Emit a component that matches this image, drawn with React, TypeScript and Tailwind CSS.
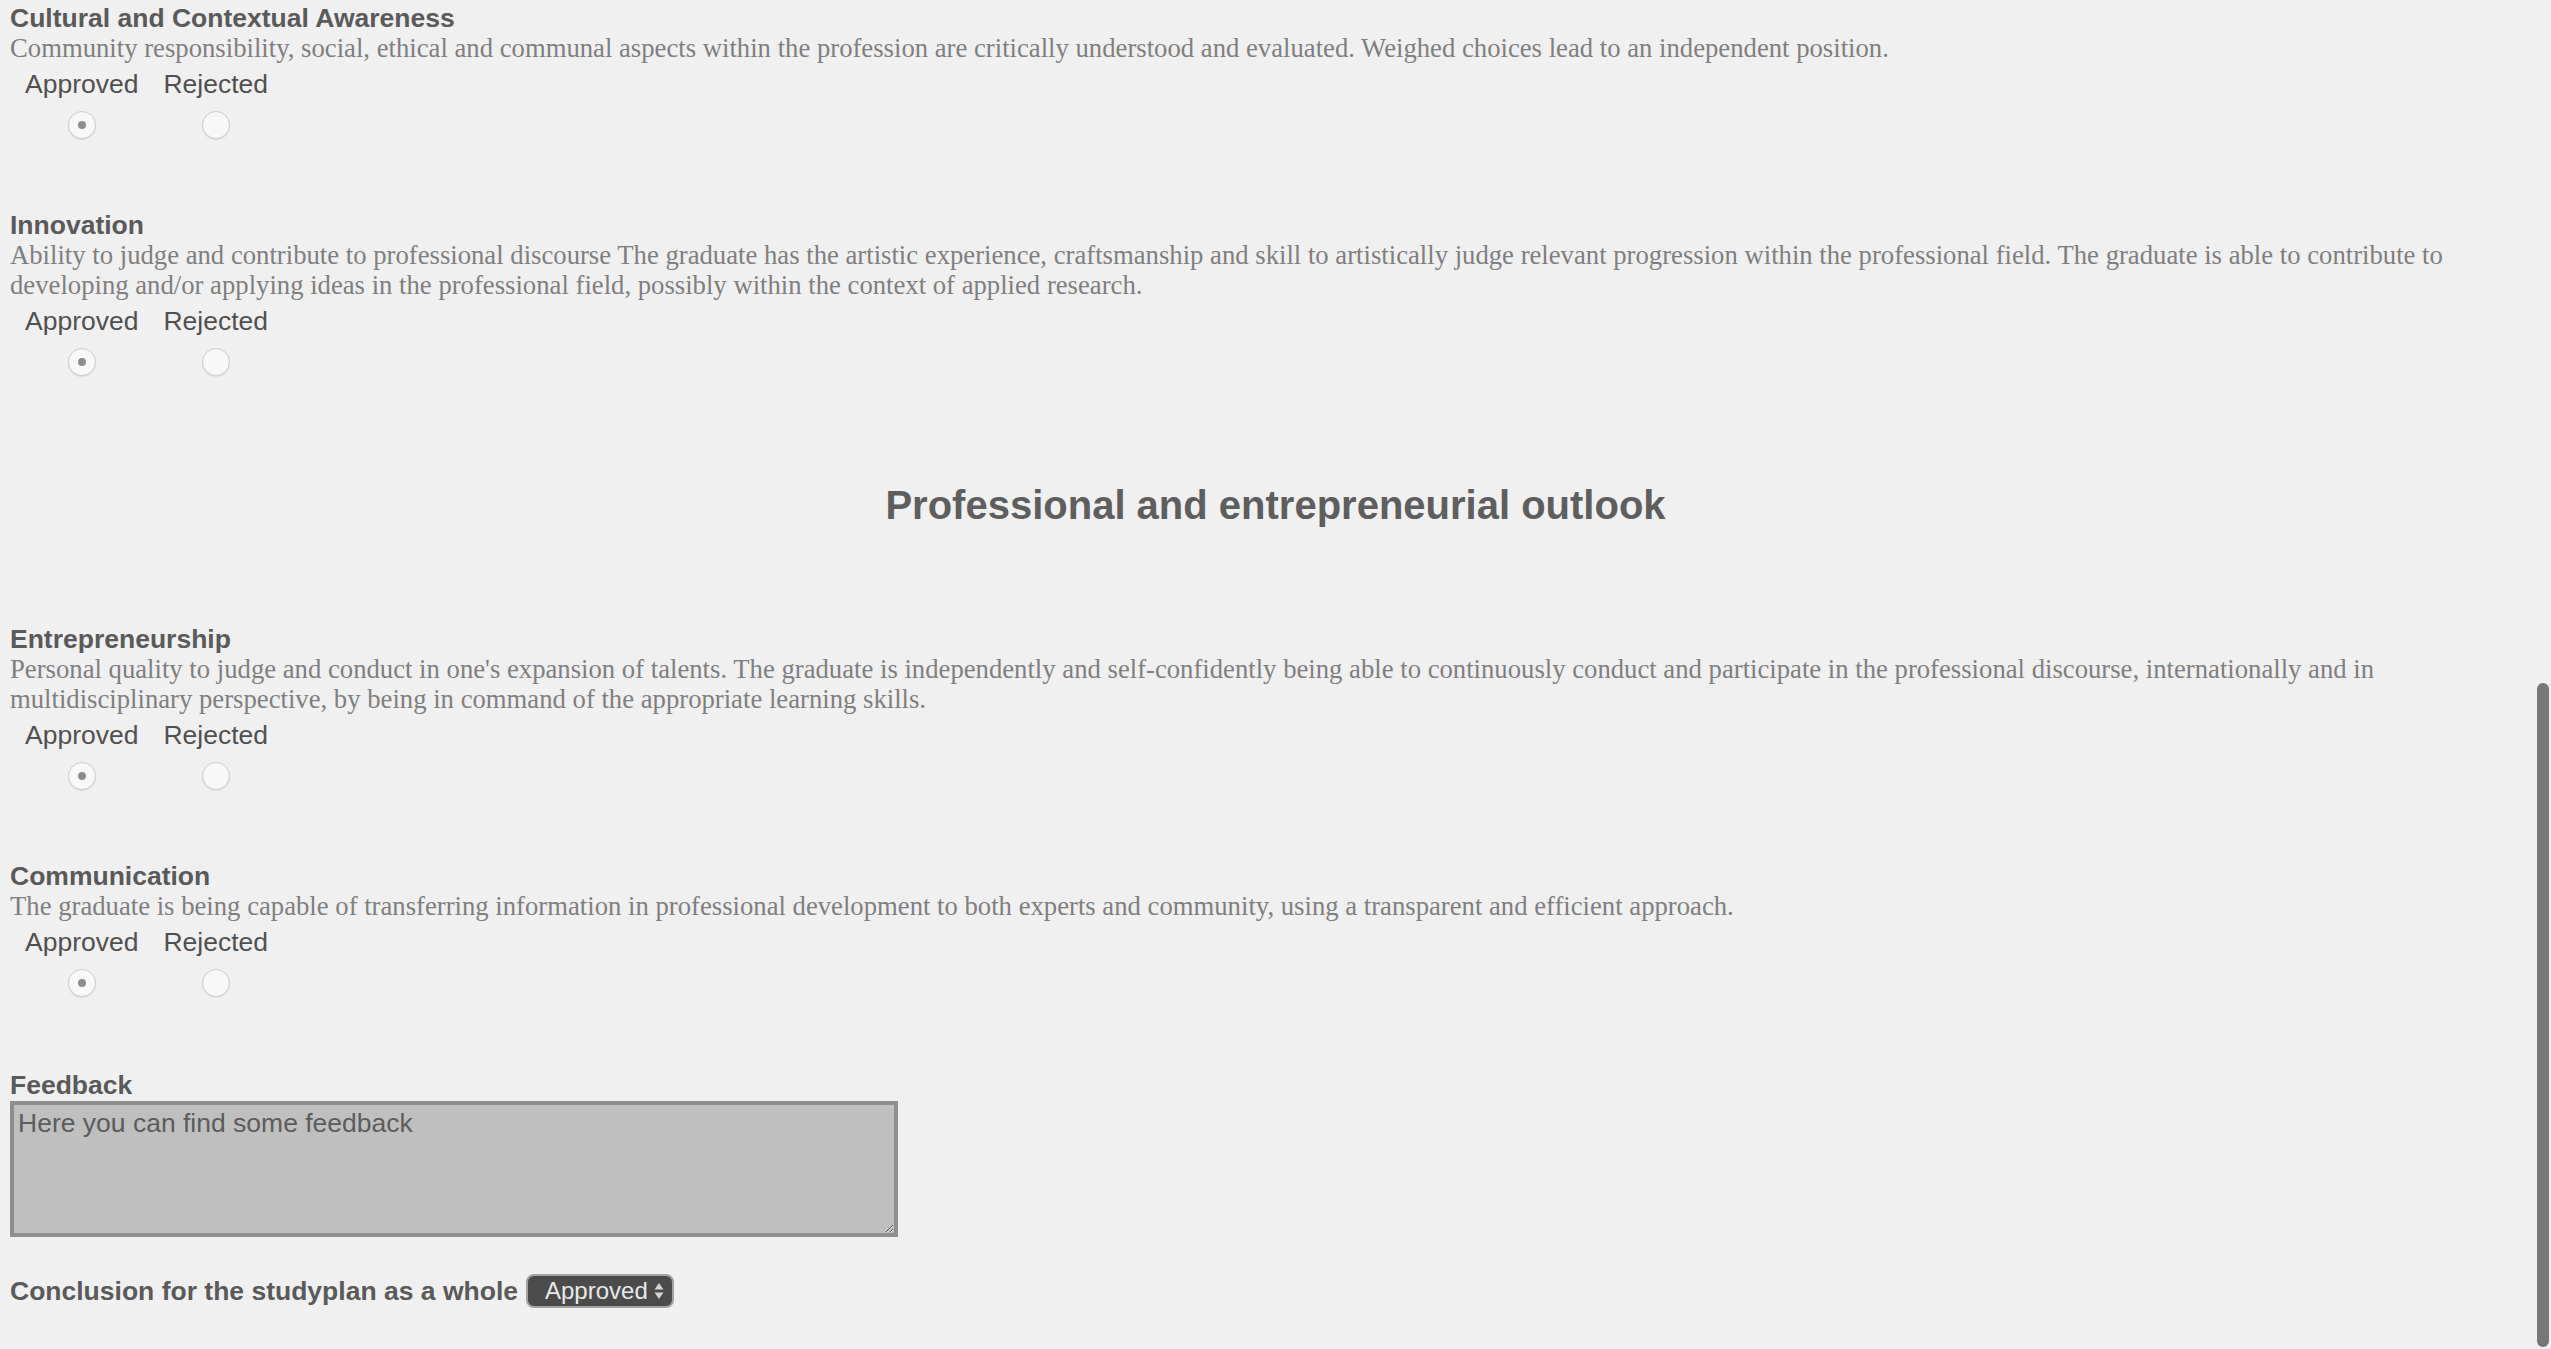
import { Fragment } from 'react';

const CRITERIA_TOP = [
  {
    title: 'Cultural and Contextual Awareness',
    text: 'Community responsibility, social, ethical and communal aspects within the profession are critically understood and evaluated. Weighed choices lead to an independent position.',
  },
  {
    title: 'Innovation',
    text: 'Ability to judge and contribute to professional discourse The graduate has the artistic experience, craftsmanship and skill to artistically judge relevant progression within the professional field. The graduate is able to contribute to developing and/or applying ideas in the professional field, possibly within the context of applied research.',
  },
];

const CRITERIA_BOTTOM = [
  {
    title: 'Entrepreneurship',
    text: "Personal quality to judge and conduct in one's expansion of talents. The graduate is independently and self-confidently being able to continuously conduct and participate in the professional discourse, internationally and in multidisciplinary perspective, by being in command of the appropriate learning skills.",
  },
  {
    title: 'Communication',
    text: 'The graduate is being capable of transferring information in professional development to both experts and community, using a transparent and efficient approach.',
  },
];

function Radio({ checked }: { checked?: boolean }) {
  return (
    <div className="mt-[12px] flex h-[28px] w-[28px] items-center justify-center rounded-full border border-[#cdcdcd] bg-[#f8f8f8] shadow-[0_1px_1px_rgba(0,0,0,0.08)]">
      {checked && <div className="h-[8px] w-[8px] rounded-full bg-[#8d8d8d]" />}
    </div>
  );
}

function Criterion({ title, text }: { title: string; text: string }) {
  return (
    <div className="mb-[71px]">
      <h3 className="text-[26.5px] font-bold leading-[30px] text-[#5a5a5a]">{title}</h3>
      <p className="font-['Liberation_Serif','Times_New_Roman',serif] text-[26.7px] leading-[30px] text-[#7f7f7f]">
        {text}
      </p>
      {/* verdict */}
      <div className="mt-[6px] flex gap-[25px] pl-[15px] text-[26.5px] leading-[30px] text-[#505050]">
        <div className="flex flex-col items-center">
          <span>Approved</span>
          <Radio checked />
        </div>
        <div className="flex flex-col items-center">
          <span>Rejected</span>
          <Radio />
        </div>
      </div>
    </div>
  );
}

export default function App() {
  return (
    <div className="relative h-[1349px] overflow-hidden bg-[#f0f0f0] px-[10px] pt-[3px] font-['Liberation_Sans',Arial,sans-serif]">
      {CRITERIA_TOP.map((c) => (
        <Fragment key={c.title}>
          <Criterion {...c} />
        </Fragment>
      ))}

      <h2 className="mt-[106px] mb-[96px] text-center text-[40px] font-bold leading-[46px] text-[#5e5e5e]">
        Professional and entrepreneurial outlook
      </h2>

      {CRITERIA_BOTTOM.map((c) => (
        <Criterion key={c.title} {...c} />
      ))}

      {/* Feedback */}
      <h3 className="mt-[73px] text-[26.5px] font-bold leading-[30px] text-[#5a5a5a]">Feedback</h3>
      <textarea
        readOnly
        defaultValue="Here you can find some feedback"
        className="mt-[1px] block h-[136px] w-[888px] border-[4px] border-[#8f8f8f] bg-[#bfbfbf] px-[4px] pt-[3px] text-[26.5px] leading-[30px] text-[#5c5c5c] outline-none"
      />

      <div className="mt-[37px] flex items-center gap-[8px]">
        <span className="text-[26.5px] font-bold leading-[30px] text-[#5a5a5a]">
          Conclusion for the studyplan as a whole
        </span>
        <div className="flex h-[34px] w-[148px] items-center rounded-[8px] border-[2px] border-[#a3a3a3] bg-[#4b4b4b] pl-[17px] pr-[8px]">
          <span className="text-[24px] leading-none text-[#e8e8e8]">Approved</span>
          <svg className="ml-auto" width="10" height="18" viewBox="0 0 10 18">
            <path d="M5 1 L9.5 7.5 H0.5 Z" fill="#d4d4d4" />
            <path d="M5 17 L9.5 10.5 H0.5 Z" fill="#d4d4d4" />
          </svg>
        </div>
      </div>

      {/* overlay scrollbar */}
      <div className="absolute top-[683px] right-[2px] bottom-[2px] w-[12px] rounded-full bg-[#777777]" />
    </div>
  );
}
